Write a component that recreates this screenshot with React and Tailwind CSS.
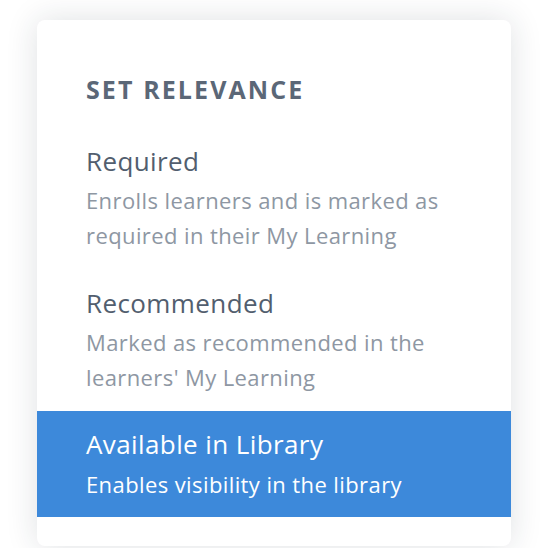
export default function App() {
  const font = { fontFamily: "'Open Sans', Lato, sans-serif" };
  return (
    <div className="w-[556px] h-[548px] bg-white overflow-hidden pt-[20px] pl-[37px]" style={font}>
      <div className="w-[474px] h-[526px] bg-white rounded-[8px] shadow-[0_0_32px_rgba(30,40,60,0.14)] pt-[54px] overflow-hidden">
        <div className="px-[49px] text-[25px] leading-[30px] font-bold tracking-[2.1px] text-[#5b6777]">SET RELEVANCE</div>
        <div className="px-[49px] mt-[40px]">
          <div className="text-[26px] leading-[34px] tracking-[0.4px] text-[#525e6e]">Required</div>
          <div className="mt-[5px] text-[22px] leading-[35px] tracking-[0.4px] text-[#8e97a3]">
            Enrolls learners and is marked as<br />required in their My Learning
          </div>
        </div>
        <div className="px-[49px] mt-[33px]">
          <div className="text-[26px] leading-[34px] tracking-[0.4px] text-[#525e6e]">Recommended</div>
          <div className="mt-[5px] text-[22px] leading-[35px] tracking-[0.4px] text-[#8e97a3]">
            Marked as recommended in the<br />learners' My Learning
          </div>
        </div>
        <div className="mt-[16px] bg-[#3d89da] px-[49px] pt-[16px] pb-[15px] text-white">
          <div className="text-[26px] leading-[34px] tracking-[0.4px]">Available in Library</div>
          <div className="mt-[6px] text-[22px] leading-[35px] tracking-[0.4px]">Enables visibility in the library</div>
        </div>
      </div>
    </div>
  );
}
